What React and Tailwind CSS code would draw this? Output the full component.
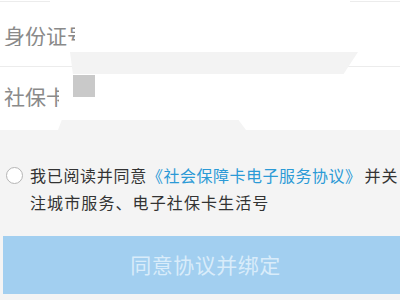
import React from "react";

export default function App() {
  const font = { fontFamily: '"Noto Sans CJK SC", "Noto Sans", sans-serif' };
  return (
    <div
      className="relative w-[400px] h-[300px] overflow-hidden bg-[#f4f4f4]"
      style={font}
    >
      <div className="bg-white h-[130px] flex flex-col">
        <div className="flex h-px mt-px">
          <div className="w-[50px] bg-[#ececec]" />
          <div className="ml-auto w-[50px] bg-[#ececec]" />
        </div>
        <div className="h-[64px] flex items-center pl-[4px]">
          <div className="w-[71px] overflow-hidden whitespace-nowrap text-[21px] leading-none text-[#8a8a8a] pt-[2px]">
            身份证号
          </div>
        </div>
        <div className="h-px bg-[#ececec]" />
        <div className="flex-1 flex items-center pl-[4px] pb-[4px]">
          <div className="w-[55px] overflow-hidden whitespace-nowrap text-[21px] leading-none text-[#8a8a8a]">
            社保卡号
          </div>
        </div>
      </div>

      <div className="absolute left-[70px] top-[52px] w-[288px] h-[22px] bg-[#f3f3f3] [clip-path:polygon(0_0,100%_0,95%_100%,1%_100%)]" />
      <div className="absolute left-[73px] top-[75px] w-[22px] h-[22px] bg-[#c9c9c9]" />
      <div className="absolute left-[58px] top-[120px] w-[188px] h-[10px] bg-[#f4f4f4] [clip-path:polygon(2%_0,96%_0,100%_100%,0_100%)]" />

      <div className="flex pt-[32px] pl-[6px]">
        <div className="mt-[5px] w-[17px] h-[17px] shrink-0 rounded-full border border-[#b5b5b5] bg-white" />
        <div className="ml-[7px] text-[16px] leading-[27px] text-[#333333] whitespace-nowrap">
          <div className="tracking-[0.7px]">
            我已阅读并同意
            <span className="text-[#2b9ad6] tracking-[0.5px]">《社会保障卡电子服务协议》</span>
            <span className="ml-[3px] tracking-[1px]">并关</span>
          </div>
          <div className="tracking-[1.1px]">注城市服务、电子社保卡生活号</div>
        </div>
      </div>

      <div className="mt-[20px] ml-[3px] h-[58px] bg-[#a2cff0] flex items-center justify-center">
        <span className="text-[21px] tracking-[0.5px] text-[#d9ecfa] pl-[8px]">
          同意协议并绑定
        </span>
      </div>
    </div>
  );
}
